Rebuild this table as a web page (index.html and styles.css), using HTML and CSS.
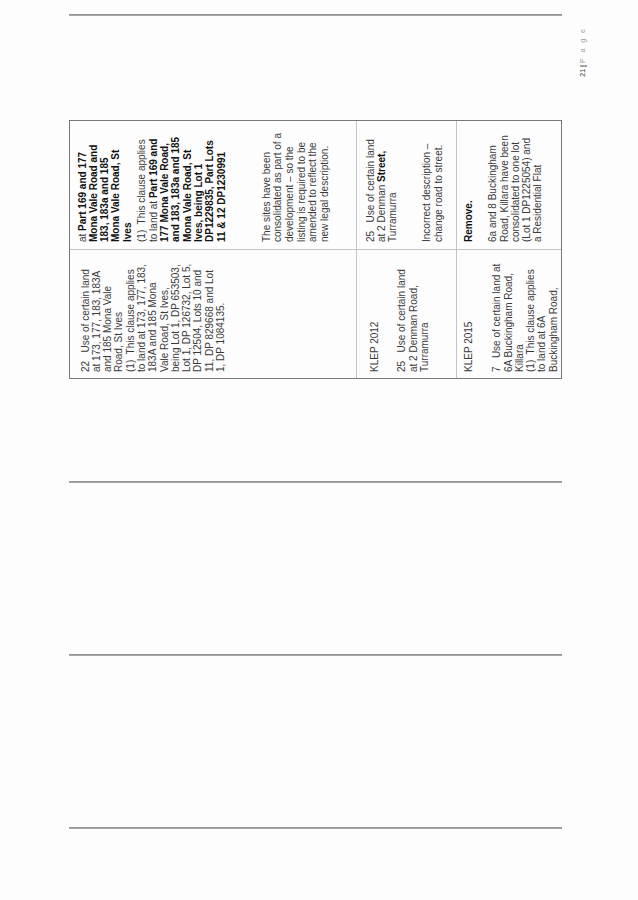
FILE: index.html
```html
<!DOCTYPE html>
<html>
<head>
<meta charset="utf-8">
<link rel="stylesheet" href="styles.css">
</head>
<body>
<div class="page">
  <div class="band">
    <div class="rule r1"></div>
    <div class="rule r2"></div>
    <div class="rule r3"></div>
    <div class="tbl">
      <div class="cell ca r1c">
        <p>22&nbsp;&nbsp; Use of certain land<br>at 173, 177, 183, 183A<br>and 185 Mona Vale<br>Road, St Ives<br>(1)&nbsp; This clause applies<br>to land at 173, 177, 183,<br>183A and 185 Mona<br>Vale Road, St Ives,<br>being Lot 1, DP 653503,<br>Lot 1, DP 126732, Lot 5,<br>DP 12504, Lots 10 and<br>11, DP 829668 and Lot<br>1, DP 1084135.</p>
      </div>
      <div class="cell cb r1c">
        <p class="p1">at <b>Part 169 and 177<br>Mona Vale Road and<br>183, 183a and 185<br>Mona Vale Road, St<br>Ives</b></p>
        <p class="p2">(1)&nbsp; This clause applies<br>to land at <b>Part 169 and<br>177 Mona Vale Road,<br>and 183, 183a and 185<br>Mona Vale Road, St<br>Ives, being Lot 1<br>DP1229835, Part Lots<br>11 &amp; 12 DP1230991</b></p>
        <p class="p3">The sites have been<br>consolidated as part of a<br>development – so the<br>listing is required to be<br>amended to reflect the<br>new legal description.</p>
      </div>
      <div class="cell ca r2a">
        <p class="lead2">KLEP 2012</p>
        <p>25&nbsp;&nbsp; Use of certain land<br>at 2 Denman Road,<br>Turramurra</p>
      </div>
      <div class="cell cb r2b">
        <p class="gap2">25&nbsp;&nbsp; Use of certain land<br>at 2 Denman <b>Street,</b><br>Turramurra</p>
        <p>Incorrect description –<br>change road to street.</p>
      </div>
      <div class="cell ca r3a">
        <p class="lead3">KLEP 2015</p>
        <p>7&nbsp;&nbsp; Use of certain land at<br>6A Buckingham Road,<br>Killara<br>(1)&nbsp; This clause applies<br>to land at 6A<br>Buckingham Road,</p>
      </div>
      <div class="cell cb r3b">
        <p class="lead3b"><b>Remove.</b></p>
        <p>6a and 8 Buckingham<br>Road, Killara have been<br>consolidated to one lot<br>(Lot 1 DP1225054) and<br>a Residential Flat</p>
      </div>
    </div>
    <div class="rule r4"></div>
  </div>
  <div class="footer"><span class="pn">21</span> <span class="bar">|</span> <span class="pg">P a g e</span></div>
</div>
</body>
</html>
```
FILE: styles.css
```css
html {
  margin: 0;
  padding: 0;
  overflow: hidden;
  background: #fdfdfd;
}

body {
  margin: 0;
  padding: 0;
  width: 638px;
  height: 900px;
}

.page {
  width: 900px;
  height: 638px;
  box-sizing: border-box;
  padding-top: 69px;
  display: flex;
  flex-direction: column;
  transform-origin: 0 0;
  transform: translate(0, 900px) rotate(-90deg);
  font-family: "Liberation Sans", Arial, sans-serif;
  font-size: 10px;
  line-height: 11.3px;
  color: #3a3a3a;
}

.band {
  display: flex;
  height: 493px;
  flex: none;
}

.rule {
  width: 2px;
  background: linear-gradient(to right, #b0b0b0, #8a8a8a);
}

.r1 { margin-left: 71px; }
.r2 { margin-left: 171px; }
.r3 { margin-left: 171px; }
.r4 { margin-left: 104px; }

.tbl {
  margin-left: 102px;
  width: 259px;
  box-sizing: border-box;
  border: 1px solid #777;
  display: grid;
  grid-template-columns: 129px 1fr;
  grid-template-rows: 287px 100px 1fr;
  overflow: hidden;
}

.cell {
  box-sizing: border-box;
  overflow: hidden;
}

.cell p {
  margin: 0;
  white-space: nowrap;
}

.cell b {
  color: #111;
}

.ca {
  border-right: 1px solid #c4c4c4;
  padding-left: 6px;
}

.cb {
  padding-left: 7px;
}

.r1c, .r2a, .r2b {
  border-bottom: 1px solid #c4c4c4;
}

.r1c.ca { padding-top: 9.5px; }
.r1c.cb { padding-top: 6.5px; }

.cell .p1 { margin-bottom: 3.5px; }
.cell .p2 { margin-bottom: 34px; }
.cell .p3 { line-height: 11.6px; }

.r2a { padding-top: 11.5px; }
.cell .lead2 { margin-bottom: 16.5px; }

.r2b { padding-top: 7.5px; }
.cell .gap2 { margin-bottom: 23px; }

.r3a { padding-top: 5.5px; }
.cell .lead3 { margin-bottom: 17.5px; }

.r3b { padding-top: 5.5px; }
.cell .lead3b { margin-bottom: 13.5px; }

.footer {
  margin-top: 16px;
  padding-right: 27px;
  text-align: right;
  font-size: 7px;
  line-height: 9px;
  color: #444;
}

.pn {
  color: #333;
}

.bar {
  font-weight: bold;
  color: #333;
}

.pg {
  color: #9a9a9a;
  letter-spacing: 2px;
}
```
